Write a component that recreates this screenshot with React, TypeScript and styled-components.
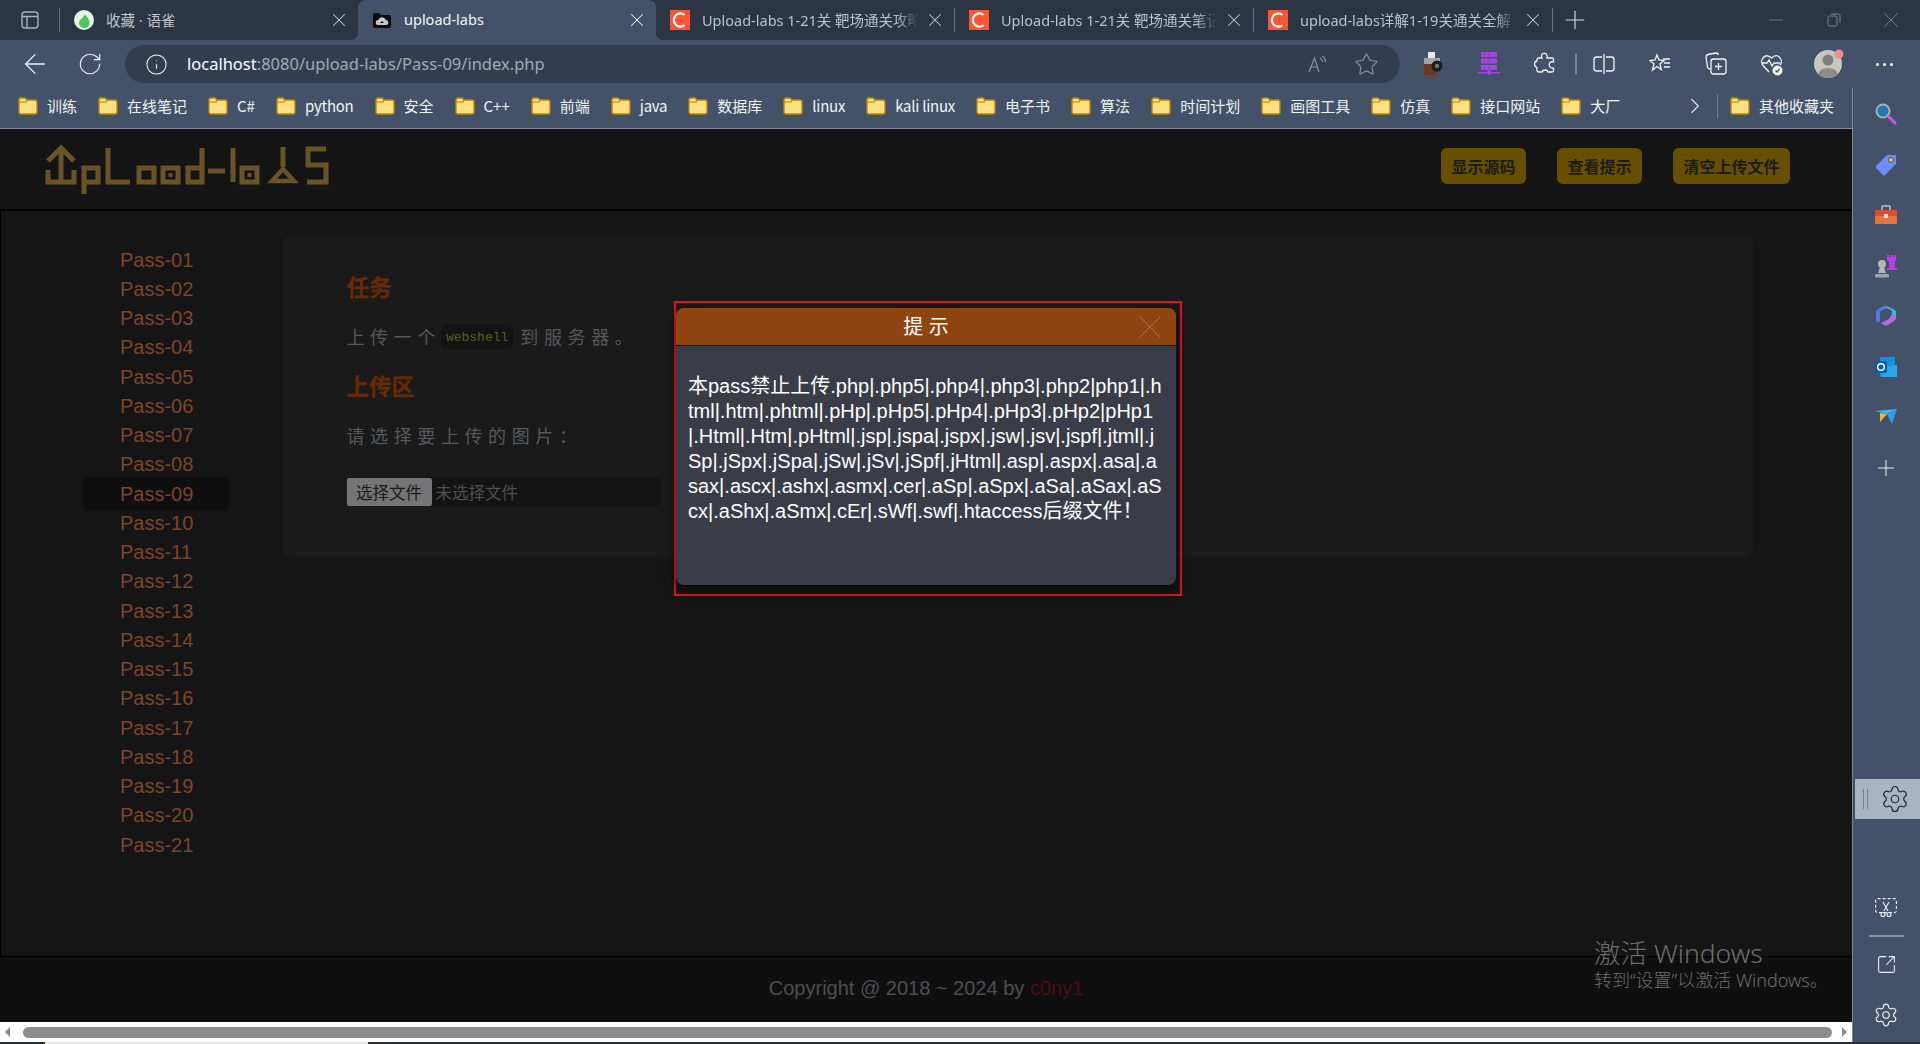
import React from "react";
import styled, { createGlobalStyle } from "styled-components";
import {
  ArrowLeft,
  RotateCw,
  Info,
  Star,
  Plus,
  X,
  Minus,
  Settings,
  ChevronRight,
  SquareArrowOutUpRight,
} from "lucide-react";

const chromeFont = `"Noto Sans", "Noto Sans CJK SC", sans-serif`;
const pageFont = `"Liberation Sans", "Noto Sans CJK SC", sans-serif`;

const GlobalStyle = createGlobalStyle`
  html, body {
    margin: 0;
    padding: 0;
    width: 1920px;
    height: 1044px;
    overflow: hidden;
    background: #151515;
  }
  * { box-sizing: border-box; }
`;

const CsdnIcon = () => (
  <svg width="20" height="20" viewBox="0 0 20 20">
    <rect width="20" height="20" fill="#fc5531" />
    <path d="M14.500 4.800A6.600 6.600 0 1 0 14.500 15.200" fill="none" stroke="#fff" strokeWidth="2.200" />
  </svg>
);

const YuqueIcon = () => (
  <svg width="20" height="20" viewBox="0 0 20 20">
    <circle cx="10" cy="10" r="10" fill="#e4f3e6" />
    <path d="M5 13c0-4 4-4 5-8 2 0 3 1 3 2 3 3 3 7 1 10-3 2-9 1-9-4z" fill="#4fc35f" />
  </svg>
);

const UploadIcon = () => (
  <svg width="20" height="20" viewBox="0 0 20 20">
    <path d="M1 5q0-2 2-2h4l2 2h8q2 0 2 2v9q0 2-2 2H3q-2 0-2-2z" fill="#0b0b0b" />
    <path d="M6 15a2.500 2.500 0 0 1 .5-5 3.600 3.600 0 0 1 7 0 2.500 2.500 0 0 1 .5 5z" fill="#c8c8c8" />
    <path d="M10 11l-2 2h4z" fill="#0b0b0b" />
  </svg>
);

const FolderIcon = () => (
  <svg width="20" height="20" viewBox="0 0 20 20">
    <path
      d="M1 4q0-2 2-2h4l2 2h8q2 0 2 2v10q0 2-2 2H3q-2 0-2-2z"
      fill="#ffdf80"
      stroke="#b8860b"
      strokeWidth="1.400"
    />
    <path d="M1 6h7l1-2" fill="none" stroke="#b8860b" strokeWidth="1.200" />
  </svg>
);

const SideTabsIcon = () => (
  <svg width="18" height="18" viewBox="0 0 18 18" fill="none" stroke="#aab0b8" strokeWidth="1.400">
    <rect x="1" y="1" width="16" height="16" rx="3" />
    <path d="M1 5.500h16M6 5.500V17" />
  </svg>
);

const RestoreIcon = () => (
  <svg width="14" height="14" viewBox="0 0 14 14" fill="none" stroke="#7c8591" strokeWidth="1">
    <rect x="1" y="3" width="9" height="10" rx="1.500" />
    <path d="M4 1h7.500A1.500 1.500 0 0 1 13 2.500V10" />
  </svg>
);

const ReadAloudIcon = () => (
  <svg width="22" height="22" viewBox="0 0 22 22" fill="none" stroke="#8893a1" strokeWidth="1.200">
    <path d="M3 19l5.500-14L13 19M5 14h7" />
    <path d="M14 5q2.500 1.500 2.500 4M16.500 3q3 2 3 6" />
  </svg>
);

const CameraIcon = () => (
  <svg width="20" height="24" viewBox="0 0 20 24">
    <rect x="5" y="0" width="7" height="6" fill="#e8e8e8" />
    <rect x="1" y="6" width="16" height="6" fill="#a0a4a8" />
    <rect x="1" y="12" width="12" height="11" fill="#6b3a1e" />
    <circle cx="14" cy="14" r="5.500" fill="#1c1c1c" />
    <circle cx="14" cy="14" r="2.200" fill="#777" />
  </svg>
);

const ServerIcon = () => (
  <svg width="22" height="24" viewBox="0 0 22 24" fill="#a943e8">
    <rect x="3" y="0" width="16" height="5" rx="1" />
    <rect x="3" y="6.500" width="16" height="5" rx="1" />
    <rect x="3" y="13" width="16" height="5" rx="1" />
    <rect x="0" y="20" width="22" height="1.400" />
    <circle cx="11" cy="20.600" r="2.200" />
    <path d="M6 2.500h1M6 9h1M6 15.500h1M10 2.500h1M10 9h1M10 15.500h1" stroke="#6b2a94" strokeWidth="1" />
  </svg>
);

const ExtensionIcon = () => (
  <svg width="22" height="24" viewBox="0 0 22 24" fill="none" stroke="#f2f4f6" strokeWidth="1.300">
    <path d="M9 1.500q3-1 4 2 .5 1.500 0 2.500h5q1.500 0 1.500 1.500v2.500q-3-1-4 1.500t1 4q1.500 1 3 .5v2.500q0 1.500-1.500 1.500h-4q-.5-2-3-2t-3 2H5q-1.500 0-2-1.500-.5-1.500-.2-3-2.300-1-2.300-3.500T3 9V7.500Q3 6 4.500 6H8q-1.500-3 1-4.500z" />
  </svg>
);

const SplitIcon = () => (
  <svg width="24" height="24" viewBox="0 0 24 24" fill="none" stroke="#f2f4f6" strokeWidth="1.300">
    <path d="M10 5H4.500Q2 5 2 7.500v9Q2 19 4.500 19H10" />
    <path d="M14 5h5.500Q22 5 22 7.500v9q0 2.500-2.500 2.500H14" />
    <path d="M12 2v20" />
  </svg>
);

const FavListIcon = () => (
  <svg width="22" height="22" viewBox="0 0 22 22" fill="none" stroke="#f2f4f6" strokeWidth="1.300">
    <path d="M8 2l2 5 5 .5-4 3.500 1.200 5.500L8 13.500 3.500 17 5 11 1 7.500 6 7z" />
    <path d="M14 6h7M15 10h6M15 14h6" />
  </svg>
);

const CollectionsIcon = () => (
  <svg width="22" height="24" viewBox="0 0 22 24" fill="none" stroke="#f2f4f6" strokeWidth="1.300">
    <path d="M5 17Q3 17 2.500 15L1 5q0-2 2-2.500L11 1q2 0 2.500 2" />
    <rect x="6" y="7" width="15" height="15" rx="2.500" />
    <path d="M13.500 11v7M10 14.500h7" />
  </svg>
);

const HealthIcon = () => (
  <svg width="24" height="24" viewBox="0 0 24 24" fill="none" stroke="#f2f4f6" strokeWidth="1.300">
    <path d="M9 20L3 13.500C-1 8 5 0 11.500 6 18 0 24 8 20 13" />
    <path d="M2 11h5l2-3 3 6 2-3h6" />
    <circle cx="17.500" cy="18.500" r="5" fill="#f2f4f6" stroke="none" />
    <path d="M15.500 18.500l1.500 1.500 2.500-3" stroke="#435268" />
  </svg>
);

const AvatarIcon = () => (
  <svg width="28" height="30" viewBox="0 0 28 30" overflow="visible">
    <circle cx="14" cy="15" r="14" fill="#c8c6c2" />
    <circle cx="14" cy="11" r="5.500" fill="#7f7c78" />
    <path d="M4 25q2-6 10-6t10 6q-4 4-10 4T4 25z" fill="#8f8c88" />
    <circle cx="25" cy="5" r="4.500" fill="#f08f8f" />
  </svg>
);

const MagnifierIcon = () => (
  <svg width="22" height="22" viewBox="0 0 22 22">
    <circle cx="8" cy="8" r="6.500" fill="#1f7ab5" stroke="#a9aeb3" strokeWidth="2" />
    <path d="M14 14l6 6" stroke="#d05ae8" strokeWidth="3" strokeLinecap="round" />
  </svg>
);

const TagIcon = () => (
  <svg width="22" height="22" viewBox="0 0 22 22">
    <path d="M1 12L12 1h8q1 0 1 1v8L10 21q-1 1-2 0l-7-7q-1-1 0-2z" fill="#6f8cff" />
    <circle cx="16" cy="6" r="2.400" fill="#f7d21c" stroke="#2b2b55" strokeWidth=".8" />
  </svg>
);

const ToolboxIcon = () => (
  <svg width="24" height="20" viewBox="0 0 24 20">
    <path d="M8 5V2q0-1 1-1h6q1 0 1 1v3" fill="none" stroke="#bfc3c8" strokeWidth="1.500" />
    <rect x="1" y="5" width="22" height="6" fill="#d5502c" />
    <rect x="1" y="11" width="22" height="8" rx="1" fill="#ec6f40" />
    <rect x="10" y="9" width="4" height="4" fill="#d9d9d9" />
  </svg>
);

const ChessIcon = () => (
  <svg width="24" height="24" viewBox="0 0 24 24">
    <path d="M13 1h2v2h1.500V1h2v2H20V1h2v5l-1.200 2v6H23v2h-10v-2h2.200V8L13 6z" fill="#b83ff0" />
    <circle cx="8" cy="10" r="4" fill="#b7b7b7" />
    <path d="M6 13h4l2 6H4z" fill="#b7b7b7" />
    <rect x="1" y="20" width="14" height="3.500" rx="1" fill="#a3a3a3" />
  </svg>
);

const CopilotIcon = () => (
  <svg width="22" height="22" viewBox="0 0 22 22">
    <path d="M1 7q0-2 2-3l6-3q2-1 4 0l1 1-8 4q-1 1-1 2v8l-2 2q-2-1-2-3z" fill="#4a7be0" />
    <path d="M14 2l6 3q1 1 1 2v6l-4-2V7q0-1-1-2L9 2z" fill="#36b6e8" />
    <path d="M21 13q0 2-2 3l-6 4q-2 1-4 0l-3-2 8-4 3-5 4 2z" fill="#b06fd8" />
  </svg>
);

const OutlookIcon = () => (
  <svg width="22" height="22" viewBox="0 0 22 22">
    <rect x="5" y="1" width="15" height="20" rx="1" fill="#1490df" />
    <path d="M7 11l15-2v12q0 0-1 0H7z" fill="#28a8ea" />
    <rect x="0" y="5" width="12" height="12" rx="1" fill="#0a5ca8" />
    <circle cx="6" cy="11" r="3.300" fill="none" stroke="#fff" strokeWidth="1.500" />
  </svg>
);

const SendIcon = () => (
  <svg width="22" height="16" viewBox="0 0 22 16">
    <path d="M0 2L22 0 12 5z" fill="#3fb8f5" />
    <path d="M12 5L22 0 17 15z" fill="#2f9bf0" />
    <path d="M5 4l7 1-7 8z" fill="#f5b820" />
  </svg>
);

const CutIcon = () => (
  <svg width="22" height="20" viewBox="0 0 22 20" fill="none" stroke="#eef1f4" strokeWidth="1.100">
    <rect x=".6" y=".6" width="20.800" height="14" rx="2" strokeDasharray="3 2" />
    <path d="M8 4l5 9M14 4l-5 9" />
    <circle cx="8" cy="16.500" r="2" />
    <circle cx="14" cy="16.500" r="2" />
  </svg>
);

const Logo = () => (
  <svg width="300" height="60" viewBox="0 0 300 60" fill="none" stroke="#6a5324" strokeWidth="5">
    <path d="M21 7v35M8 21L21 8l13 13M8 30v12h26V30" />
    <path d="M44 54V28h14v14H44" />
    <path d="M68 8v34h22" />
    <rect x="99" y="28" width="15" height="14" />
    <rect x="123" y="28" width="15" height="14" />
    <rect x="128.500" y="33" width="4" height="4" fill="#6a5324" stroke="none" />
    <path d="M162 8v34h-14V28h14" />
    <path d="M168 31h17" />
    <path d="M193 8v34" />
    <rect x="202" y="28" width="15" height="14" />
    <rect x="207.500" y="33" width="4" height="4" fill="#6a5324" stroke="none" />
    <path d="M243 7v20" />
    <path d="M232 41l11-12 11 12z" strokeWidth="4.500" />
    <path d="M286 9h-18v16h18v17h-19" />
  </svg>
);

const App = () => {
  const tabs = [
    { title: "收藏 · 语雀", icon: <YuqueIcon />, active: false, sep: false, fade: false },
    { title: "upload-labs", icon: <UploadIcon />, active: true, sep: false, fade: false },
    { title: "Upload-labs 1-21关 靶场通关攻略", icon: <CsdnIcon />, active: false, sep: true, fade: true },
    { title: "Upload-labs 1-21关 靶场通关笔记", icon: <CsdnIcon />, active: false, sep: true, fade: true },
    { title: "upload-labs详解1-19关通关全解", icon: <CsdnIcon />, active: false, sep: true, fade: true },
  ];
  const bookmarks = [
    "训练", "在线笔记", "C#", "python", "安全", "C++", "前端", "java", "数据库", "linux",
    "kali linux", "电子书", "算法", "时间计划", "画图工具", "仿真", "接口网站", "大厂",
  ];
  const passes = Array.from({ length: 21 }, (_, i) => `Pass-${String(i + 1).padStart(2, "0")}`);
  const hintLines = [
    "本pass禁止上传.php|.php5|.php4|.php3|.php2|php1|.h",
    "tml|.htm|.phtml|.pHp|.pHp5|.pHp4|.pHp3|.pHp2|pHp1",
    "|.Html|.Htm|.pHtml|.jsp|.jspa|.jspx|.jsw|.jsv|.jspf|.jtml|.j",
    "Sp|.jSpx|.jSpa|.jSw|.jSv|.jSpf|.jHtml|.asp|.aspx|.asa|.a",
    "sax|.ascx|.ashx|.asmx|.cer|.aSp|.aSpx|.aSa|.aSax|.aS",
    "cx|.aShx|.aSmx|.cEr|.sWf|.swf|.htaccess后缀文件！",
  ];

  return (
    <Shell>
      <GlobalStyle />
      <TabBar>
        <TabStart>
          <SideTabsIcon />
        </TabStart>
        <Separator />
        {tabs.map((t) => (
          <React.Fragment key={t.title}>
            <Tab $active={t.active}>
              <Favicon>{t.icon}</Favicon>
              <TabTitle $active={t.active} $fade={t.fade}>{t.title}</TabTitle>
              <TabClose>
                <X size={22} strokeWidth={1.1} color={t.active ? "#f2f4f6" : "#c4c9cf"} />
              </TabClose>
            </Tab>
            {t.sep && <Separator />}
          </React.Fragment>
        ))}
        <NewTab>
          <Plus size={30} strokeWidth={0.9} color="#d7dbe0" />
        </NewTab>
        <WindowControls>
          <WindowSlot><Minus size={22} strokeWidth={0.9} color="#7c8591" /></WindowSlot>
          <WindowSlot><RestoreIcon /></WindowSlot>
          <WindowSlot><X size={26} strokeWidth={0.8} color="#7c8591" /></WindowSlot>
        </WindowControls>
      </TabBar>

      <Toolbar>
        <NavButton>
          <ArrowLeft size={32} strokeWidth={0.95} color="#f2f4f6" />
        </NavButton>
        <NavButton>
          <RotateCw size={26} strokeWidth={1.05} color="#f2f4f6" />
        </NavButton>
        <AddressBar>
          <Info size={23} strokeWidth={1.1} color="#f2f4f6" />
          <Url>
            <b>localhost</b>:8080/upload-labs/Pass-09/index.php
          </Url>
          <AddressActions>
            <ReadAloudIcon />
            <Star size={25} strokeWidth={1.1} color="#8893a1" />
          </AddressActions>
        </AddressBar>
        <ToolIcons>
          <ToolSlot><CameraIcon /></ToolSlot>
          <ToolSlot><ServerIcon /></ToolSlot>
          <ToolSlot><ExtensionIcon /></ToolSlot>
          <ToolDivider />
          <ToolSlot><SplitIcon /></ToolSlot>
          <ToolSlot><FavListIcon /></ToolSlot>
          <ToolSlot><CollectionsIcon /></ToolSlot>
          <ToolSlot><HealthIcon /></ToolSlot>
          <ToolSlot><AvatarIcon /></ToolSlot>
          <Dots>
            <i />
            <i />
            <i />
          </Dots>
        </ToolIcons>
      </Toolbar>

      <Lower>
        <Viewport>
          <Bookmarks>
            {bookmarks.map((b) => (
              <Bookmark key={b} $latin={/^[a-z]/.test(b)}>
                <FolderIcon />
                {b}
              </Bookmark>
            ))}
            <BookmarkEnd>
              <ChevronRight size={26} strokeWidth={1} color="#e6e9ec" />
              <BookmarkDivider />
              <Bookmark $latin={false}>
                <FolderIcon />
                其他收藏夹
              </Bookmark>
            </BookmarkEnd>
          </Bookmarks>

          <Page>
            <Header>
              <Logo />
              <HeaderButtons>
                <HeaderButton>显示源码</HeaderButton>
                <HeaderButton>查看提示</HeaderButton>
                <HeaderButton>清空上传文件</HeaderButton>
              </HeaderButtons>
            </Header>

            <Main>
              <Menu>
                {passes.map((p) => (
                  <MenuItem key={p} $current={p === "Pass-09"}>
                    {p}
                  </MenuItem>
                ))}
              </Menu>
              <Panel>
                <SectionTitle>任务</SectionTitle>
                <Paragraph>
                  上传一个<Code>webshell</Code>到服务器。
                </Paragraph>
                <SectionTitle>上传区</SectionTitle>
                <Paragraph>请选择要上传的图片：</Paragraph>
                <FileField>
                  <FileButton>选择文件</FileButton>
                  <FileName>未选择文件</FileName>
                </FileField>
              </Panel>
            </Main>

            <Footer>
              Copyright @ 2018 ~ 2024 by <Author>c0ny1</Author>
            </Footer>

            <Highlight>
              <Modal>
                <ModalHead>
                  提 示
                  <ModalClose>
                    <X size={40} strokeWidth={0.6} color="#ab7346" />
                  </ModalClose>
                </ModalHead>
                <ModalBody>
                  {hintLines.map((line) => (
                    <ModalLine key={line}>{line}</ModalLine>
                  ))}
                </ModalBody>
              </Modal>
            </Highlight>

            <Watermark>
              <WatermarkTitle>激活 Windows</WatermarkTitle>
              <WatermarkText>转到“设置”以激活 Windows。</WatermarkText>
            </Watermark>
          </Page>

          <HScroll>
            <ScrollArrow $dir="left" />
            <ScrollThumb />
            <ScrollArrow $dir="right" />
          </HScroll>
        </Viewport>

        <Sidebar>
          <SideIcon><MagnifierIcon /></SideIcon>
          <SideIcon><TagIcon /></SideIcon>
          <SideIcon><ToolboxIcon /></SideIcon>
          <SideIcon><ChessIcon /></SideIcon>
          <SideIcon><CopilotIcon /></SideIcon>
          <SideIcon><OutlookIcon /></SideIcon>
          <SideIcon><SendIcon /></SideIcon>
          <SideIcon><Plus size={26} strokeWidth={0.9} color="#f2f4f6" /></SideIcon>
          <SettingsSlot>
            <Handle />
            <Settings size={30} strokeWidth={0.95} color="#1d2733" />
          </SettingsSlot>
          <SideBottom>
            <SideIcon><CutIcon /></SideIcon>
            <SideRule />
            <SideIcon><SquareArrowOutUpRight size={21} strokeWidth={1.2} color="#f2f4f6" /></SideIcon>
            <SideIcon><Settings size={26} strokeWidth={1.05} color="#f2f4f6" /></SideIcon>
          </SideBottom>
        </Sidebar>
      </Lower>

      <Taskbar>
        <TaskbarItem />
      </Taskbar>
    </Shell>
  );
};

export default App;

const Shell = styled.div`
  width: 1920px;
  height: 1044px;
  display: flex;
  flex-direction: column;
  overflow: hidden;
  font-family: ${chromeFont};
`;

const TabBar = styled.div`
  height: 40px;
  flex: none;
  display: flex;
  align-items: center;
  background: #2b3543;
`;

const TabStart = styled.div`
  width: 59px;
  padding-left: 21px;
  display: flex;
`;

const Separator = styled.div`
  width: 1px;
  height: 24px;
  flex: none;
  background: #6c7580;
`;

const Tab = styled.div<{ $active: boolean }>`
  position: relative;
  width: 298px;
  height: 40px;
  flex: none;
  display: flex;
  align-items: center;
  gap: 12px;
  padding: 0 8px 0 14px;
  background: ${(p) => (p.$active ? "#435268" : "transparent")};
  border-radius: ${(p) => (p.$active ? "8px 8px 0 0" : "0")};
  ${(p) =>
    p.$active &&
    `
    &::before, &::after {
      content: "";
      position: absolute;
      bottom: 0;
      width: 8px;
      height: 8px;
    }
    &::before {
      left: -8px;
      background: radial-gradient(circle at 0 0, transparent 8px, #435268 8.5px);
    }
    &::after {
      right: -8px;
      background: radial-gradient(circle at 100% 0, transparent 8px, #435268 8.5px);
    }
  `}
`;

const Favicon = styled.span`
  width: 20px;
  height: 20px;
  flex: none;
  display: flex;
`;

const TabTitle = styled.span<{ $active: boolean; $fade: boolean }>`
  flex: 1;
  min-width: 0;
  margin-top: -2px;
  overflow: hidden;
  white-space: nowrap;
  font-size: 14.5px;
  color: ${(p) => (p.$active ? "#f5f6f8" : "#bcc2c9")};
  ${(p) => p.$fade && `mask-image: linear-gradient(90deg, #000 90%, transparent);`}
`;

const TabClose = styled.span`
  margin-left: -6px;
  display: flex;
  flex: none;
`;

const NewTab = styled.div`
  width: 44px;
  display: flex;
  justify-content: center;
`;

const WindowControls = styled.div`
  margin-left: auto;
  display: flex;
  align-items: center;
`;

const WindowSlot = styled.div`
  width: 57.5px;
  display: flex;
  justify-content: center;
`;

const Toolbar = styled.div`
  height: 48px;
  flex: none;
  display: flex;
  align-items: center;
  padding-left: 7px;
  background: #435268;
`;

const NavButton = styled.div`
  width: 56px;
  display: flex;
  justify-content: center;
  &:nth-child(2) {
    width: 54px;
  }
`;

const AddressBar = styled.div`
  width: 1275px;
  height: 38px;
  margin-left: 8px;
  flex: none;
  display: flex;
  align-items: center;
  padding: 0 21px 0 20px;
  border-radius: 19px;
  background: #323e4f;
`;

const Url = styled.div`
  margin-left: 19px;
  margin-top: -2px;
  font-size: 16.5px;
  color: #a3abb5;
  b {
    font-weight: 400;
    color: #fff;
  }
`;

const AddressActions = styled.div`
  margin-left: auto;
  display: flex;
  align-items: center;
  gap: 26px;
`;

const ToolIcons = styled.div`
  flex: 1;
  display: flex;
  align-items: center;
  padding-left: 5px;
`;

const ToolSlot = styled.div`
  width: 56px;
  display: flex;
  justify-content: center;
`;

const ToolDivider = styled.div`
  width: 2px;
  height: 20px;
  margin: 0 -1px 0 2px;
  background: #76828f;
`;

const Dots = styled.div`
  width: 56px;
  display: flex;
  justify-content: center;
  gap: 4px;
  i {
    width: 3px;
    height: 3px;
    border-radius: 50%;
    background: #f2f4f6;
  }
`;

const Lower = styled.div`
  flex: 1;
  min-height: 0;
  display: flex;
`;

const Viewport = styled.div`
  flex: 1;
  min-width: 0;
  display: flex;
  flex-direction: column;
`;

const Bookmarks = styled.div`
  height: 41px;
  flex: none;
  display: flex;
  align-items: center;
  gap: 21px;
  padding: 0 0 5px 18px;
  background: #435268;
  border-bottom: 1px solid #84909f;
`;

const Bookmark = styled.div<{ $latin: boolean }>`
  display: flex;
  align-items: center;
  gap: 9px;
  font-family: "Noto Sans CJK SC", "Noto Sans", sans-serif;
  font-size: 15px;
  letter-spacing: ${(p) => (p.$latin ? "-0.25px" : "0")};
  color: #f2f4f6;
  white-space: nowrap;
`;

const BookmarkEnd = styled.div`
  margin-left: auto;
  padding-right: 18px;
  display: flex;
  align-items: center;
  gap: 9px;
`;

const BookmarkDivider = styled.div`
  width: 1px;
  height: 24px;
  margin-right: 3px;
  background: #6f7b8a;
`;

const Page = styled.div`
  position: relative;
  flex: 1;
  min-height: 0;
  display: flex;
  flex-direction: column;
  font-family: ${pageFont};
  background: #151515;
`;

const Header = styled.div`
  height: 82px;
  flex: none;
  display: flex;
  justify-content: space-between;
  padding: 11px 62px 0 40px;
  background: #141414;
  border-bottom: 2px solid #000;
`;

const HeaderButtons = styled.div`
  display: flex;
  gap: 31px;
  margin-top: 8px;
`;

const HeaderButton = styled.div`
  height: 36px;
  padding: 0 10.5px;
  display: flex;
  align-items: center;
  border-radius: 6px;
  background: #665000;
  color: #1c1c18;
  font-size: 16px;
  font-weight: 700;
`;

const Main = styled.div`
  flex: 1;
  min-height: 0;
  display: flex;
  align-items: flex-start;
  padding-top: 25px;
  border-left: 1px solid #000;
  border-bottom: 1px solid #000;
  background: #151515;
`;

const Menu = styled.ul`
  width: 148px;
  margin: 9.5px 0 0 81px;
  padding: 0;
  list-style: none;
`;

const MenuItem = styled.li<{ $current: boolean }>`
  height: 29.25px;
  line-height: 29.25px;
  padding-left: 38px;
  font-size: 20px;
  color: #7c452a;
  ${(p) =>
    p.$current &&
    `
    height: 34.25px;
    line-height: 34.25px;
    margin: -2.5px 0;
    border-radius: 8px;
    background: #0f0f0f;
  `}
`;

const Panel = styled.div`
  width: 1470px;
  height: 321px;
  margin-left: 53px;
  padding: 37px 0 0 63.5px;
  display: flex;
  flex-direction: column;
  align-items: flex-start;
  border-radius: 8px;
  background: #1a1a1a;
`;

const SectionTitle = styled.div`
  height: 32px;
  line-height: 32px;
  font-size: 22.5px;
  font-weight: 700;
  color: #672a06;
  -webkit-text-stroke: 0.3px #672a06;
`;

const Paragraph = styled.div`
  height: 34px;
  margin: 14px 0 18.5px;
  display: flex;
  align-items: center;
  font-size: 18px;
  letter-spacing: 5.6px;
  color: #56585b;
`;

const Code = styled.span`
  height: 25px;
  margin: 0 7px 0 0;
  padding: 2px 5px 0;
  display: flex;
  align-items: center;
  border-radius: 6px;
  background: #131313;
  font-family: "Liberation Mono", monospace;
  font-size: 13px;
  letter-spacing: 0;
  color: #5e5f1f;
`;

const FileField = styled.div`
  width: 314px;
  height: 29px;
  margin-top: 7px;
  display: flex;
  align-items: center;
  gap: 4px;
  border-radius: 6px;
  background: #131313;
`;

const FileButton = styled.div`
  width: 85px;
  height: 28px;
  display: flex;
  align-items: center;
  justify-content: center;
  border-radius: 2px;
  background: #757575;
  color: #191919;
  font-size: 16.5px;
`;

const FileName = styled.span`
  font-size: 16.5px;
  color: #4f4f4f;
`;

const Footer = styled.div`
  height: 65px;
  flex: none;
  display: flex;
  align-items: center;
  justify-content: center;
  padding-bottom: 3px;
  background: #0f0f0f;
  font-size: 20px;
  color: #4c4e54;
  white-space: pre;
`;

const Author = styled.span`
  color: #4a0d12;
`;

const Highlight = styled.div`
  position: absolute;
  left: 674px;
  top: 172px;
  width: 508px;
  height: 295px;
  padding: 5px 4px 9px 0;
  border: 2px solid #e81123;
`;

const Modal = styled.div`
  height: 100%;
  display: flex;
  flex-direction: column;
  border-radius: 8px;
  overflow: hidden;
  background: #3a3d47;
  box-shadow: 0 4px 12px rgba(0, 0, 0, 0.6);
`;

const ModalHead = styled.div`
  position: relative;
  height: 38px;
  flex: none;
  display: flex;
  align-items: center;
  justify-content: center;
  padding-bottom: 2px;
  background: #8f4510;
  border-bottom: 1px solid #1c1208;
  color: #fff;
  font-size: 20px;
  white-space: pre;
`;

const ModalClose = styled.span`
  position: absolute;
  right: 6px;
  top: -1px;
  display: flex;
`;

const ModalBody = styled.div`
  padding: 28px 12px 0;
  font-size: 20px;
  line-height: 25px;
  color: #fff;
`;

const ModalLine = styled.div`
  white-space: nowrap;
`;

const Watermark = styled.div`
  position: absolute;
  left: 1594px;
  top: 808px;
  font-family: "Noto Sans", "Noto Sans CJK SC", sans-serif;
  font-weight: 300;
  color: #6d6d6d;
  white-space: nowrap;
`;

const WatermarkTitle = styled.div`
  font-size: 26.5px;
  line-height: 32px;
`;

const WatermarkText = styled.div`
  font-size: 18px;
  line-height: 22px;
`;

const HScroll = styled.div`
  height: 20px;
  flex: none;
  display: flex;
  align-items: center;
  padding: 0 5px;
  background: #fff;
`;

const ScrollArrow = styled.div<{ $dir: "left" | "right" }>`
  width: 0;
  height: 0;
  flex: none;
  border-top: 5px solid transparent;
  border-bottom: 5px solid transparent;
  ${(p) =>
    p.$dir === "left"
      ? "border-right: 5px solid #8a8a8a;"
      : "border-left: 5px solid #8a8a8a;"}
`;

const ScrollThumb = styled.div`
  flex: 1;
  height: 11px;
  margin: 0 10px 0 13px;
  border-radius: 6px;
  background: #8d8d8d;
`;

const Sidebar = styled.div`
  width: 68px;
  flex: none;
  display: flex;
  flex-direction: column;
  align-items: center;
  padding: 1px 1px 2px 0;
  background: #435268;
  border-left: 1px solid #7c8898;
`;

const SideIcon = styled.div`
  width: 100%;
  height: 50.5px;
  flex: none;
  display: flex;
  align-items: center;
  justify-content: center;
`;

const SettingsSlot = styled.div`
  align-self: flex-end;
  width: 65px;
  height: 40px;
  margin: 286px -1px 0 0;
  padding-left: 8px;
  display: flex;
  align-items: center;
  gap: 12px;
  background: #a9b4c1;
`;

const Handle = styled.div`
  width: 5px;
  height: 20px;
  border-left: 1px solid #77828f;
  border-right: 1px solid #77828f;
`;

const SideBottom = styled.div`
  margin-top: auto;
  width: 100%;
  display: flex;
  flex-direction: column;
  align-items: center;
`;

const SideRule = styled.div`
  width: 35px;
  height: 2px;
  margin: 2px 0;
  background: #8893a1;
`;

const Taskbar = styled.div`
  height: 2px;
  flex: none;
  padding-left: 45px;
  background: #22303c;
`;

const TaskbarItem = styled.div`
  width: 323px;
  height: 2px;
  background: #e8e8e8;
`;
